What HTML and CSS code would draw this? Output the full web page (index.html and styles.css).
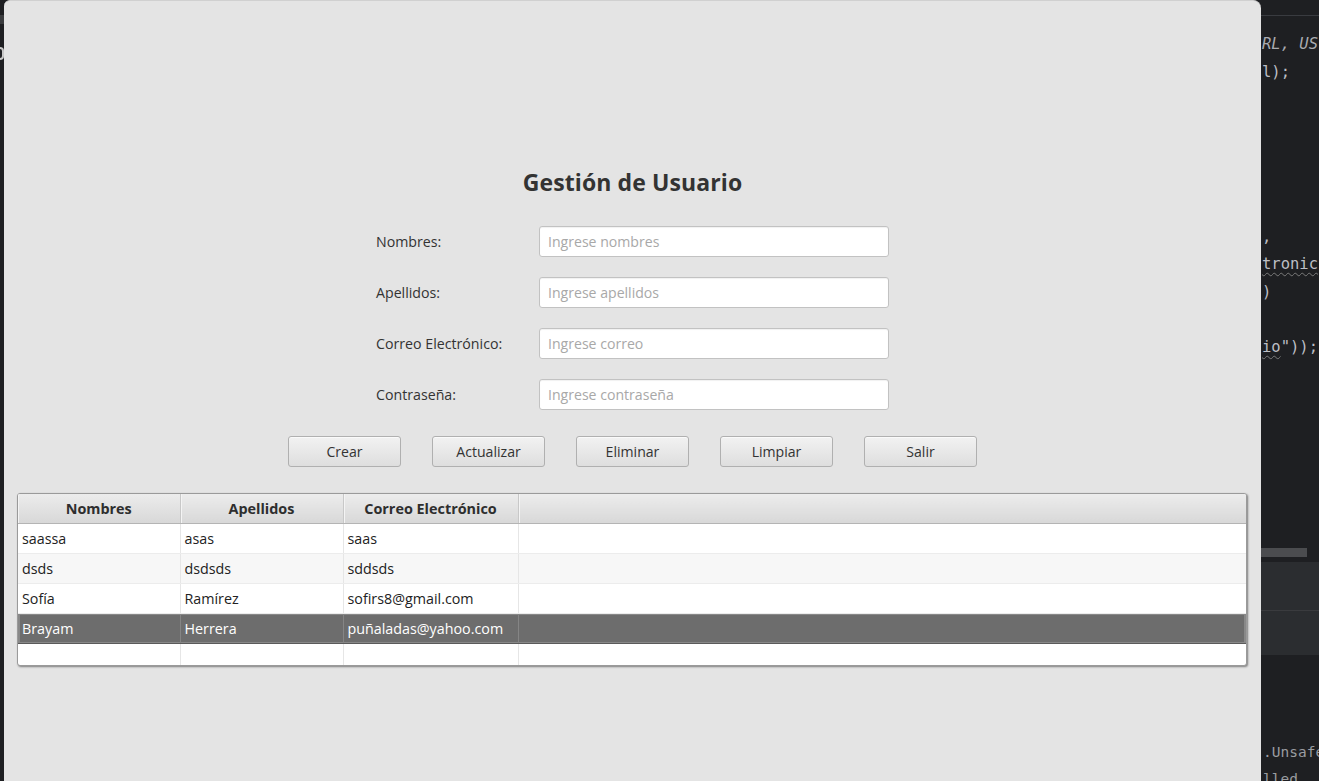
FILE: index.html
```html
<!DOCTYPE html>
<html lang="es">
<head>
<meta charset="utf-8">
<title>Gestión de Usuario</title>
<link rel="stylesheet" href="styles.css">
</head>
<body>
<div class="desktop">
  <div class="left-strip">
    <div class="strip-mark"></div>
    <div class="strip-glyph"></div>
  </div>
  <main class="window">
    <h1 class="title">Gestión de Usuario</h1>
    <form class="form">
      <label class="label">Nombres:</label>
      <input class="field" type="text" placeholder="Ingrese nombres">
      <label class="label">Apellidos:</label>
      <input class="field" type="text" placeholder="Ingrese apellidos">
      <label class="label">Correo Electrónico:</label>
      <input class="field" type="text" placeholder="Ingrese correo">
      <label class="label">Contraseña:</label>
      <input class="field" type="password" placeholder="Ingrese contraseña">
    </form>
    <div class="buttons">
      <button class="btn" type="button">Crear</button>
      <button class="btn" type="button">Actualizar</button>
      <button class="btn" type="button">Eliminar</button>
      <button class="btn" type="button">Limpiar</button>
      <button class="btn" type="button">Salir</button>
    </div>
    <div class="table-wrap">
      <table class="grid">
        <colgroup>
          <col class="c1"><col class="c2"><col class="c3"><col class="c4">
        </colgroup>
        <thead>
          <tr><th>Nombres</th><th>Apellidos</th><th>Correo Electrónico</th><th></th></tr>
        </thead>
        <tbody>
          <tr><td>saassa</td><td>asas</td><td>saas</td><td></td></tr>
          <tr class="odd"><td>dsds</td><td>dsdsds</td><td>sddsds</td><td></td></tr>
          <tr><td>Sofía</td><td>Ramírez</td><td>sofirs8@gmail.com</td><td></td></tr>
          <tr class="selected"><td>Brayam</td><td>Herrera</td><td>puñaladas@yahoo.com</td><td></td></tr>
          <tr class="empty"><td></td><td></td><td></td><td></td></tr>
        </tbody>
      </table>
    </div>
  </main>
  <aside class="ide">
    <div class="ide-top"></div>
    <pre class="code"><span class="it">RL, US</span>
l);





,
<span class="wavy">tronic</span>
)

<span class="wavy">io</span>"));</pre>
    <div class="ide-scroll"></div>
    <div class="ide-panel"></div>
    <div class="ide-panel second"></div>
    <pre class="code bottom">.Unsafe
lled</pre>
  </aside>
</div>
</body>
</html>
```
FILE: styles.css
```css
* { box-sizing: border-box; }
html, body { margin: 0; padding: 0; }
body {
  width: 1319px;
  height: 781px;
  overflow: hidden;
  background: #1e1f22;
  font-family: "Open Sans", "Noto Sans", sans-serif;
}
.desktop {
  display: flex;
  width: 1319px;
  height: 781px;
}
.left-strip {
  width: 4px;
  flex: none;
  background: #1e1f22;
  display: flex;
  flex-direction: column;
}
.strip-mark {
  margin-top: 15px;
  height: 9px;
  background: #3a3b3e;
}
.strip-glyph {
  margin-top: 23px;
  height: 13px;
  width: 4px;
  border: 2px solid #c8c8c8;
  border-left: none;
  border-radius: 0 6px 6px 0;
}
.window {
  width: 1257px;
  flex: none;
  height: 781px;
  background: #e4e4e4;
  border-radius: 6px 8px 0 0;
  border-top: 1px solid #d0d0d0;
  display: flex;
  flex-direction: column;
  align-items: center;
  color: #333;
}
.title {
  margin: 165px 0 0;
  font-size: 23px;
  line-height: 32px;
  font-weight: 700;
  color: #333;
  letter-spacing: 0.1px;
}
.form {
  margin-top: 28px;
  display: grid;
  grid-template-columns: 163px 350px;
  row-gap: 20px;
  align-items: center;
}
.label {
  font-size: 14.2px;
  color: #333;
}
.field {
  height: 31px;
  width: 350px;
  border: 1px solid #c2c2c2;
  border-radius: 3px;
  background: #fff;
  padding: 0 8px;
  font-family: inherit;
  font-size: 14.1px;
  color: #333;
  box-shadow: inset 0 1px 1px rgba(0,0,0,0.06);
  outline: none;
}
.field::placeholder { color: #a8a8a8; }
.buttons {
  margin-top: 26px;
  display: flex;
  gap: 31px;
}
.btn {
  width: 113px;
  height: 31px;
  border: 1px solid #b0b0b0;
  border-radius: 3px;
  background: linear-gradient(#f2f2f2, #dedede);
  box-shadow: inset 0 1px 0 #fafafa;
  font-family: inherit;
  font-size: 14.1px;
  line-height: 29px;
  color: #333;
  padding: 0 0 1px;
}
.table-wrap {
  margin-top: 26px;
  align-self: stretch;
  margin-left: 13px;
  margin-right: 14px;
  border: 1px solid #9a9a9a;
  border-radius: 3px;
  background: #fff;
  box-shadow: 1px 1px 2px rgba(0,0,0,0.45);
  overflow: hidden;
}
.grid {
  width: 100%;
  border-collapse: collapse;
  table-layout: fixed;
  font-size: 14.3px;
  color: #222;
}
.c1 { width: 162px; }
.c2 { width: 163px; }
.c3 { width: 175px; }
.grid th {
  height: 29px;
  padding: 0;
  font-size: 14.4px;
  font-weight: 700;
  color: #2e2e2e;
  background: linear-gradient(#ececec, #d8d8d8);
  border-right: 1px solid #c8c8c8;
  border-bottom: 1px solid #b4b4b4;
  box-shadow: inset 1px 0 0 #f4f4f4;
}
.grid th:last-child { border-right: none; }
.grid td {
  height: 30px;
  padding: 0 4px;
  border-right: 1px solid #e6e6e6;
  border-bottom: 1px solid #ececec;
  white-space: nowrap;
}
.grid td:last-child { border-right: none; }
.grid tr.odd td { background: #f7f7f7; }
.grid tr.selected td {
  background: #6d6d6d;
  color: #fff;
  border-right-color: #858585;
  border-top: 1px solid #5a5a5a;
  border-bottom: 1px solid #5a5a5a;
  box-shadow: inset 0 1px 0 #888, inset 0 -1px 0 #888;
}
.grid tr.selected td:first-child { box-shadow: inset 0 1px 0 #888, inset 0 -1px 0 #888, inset 2px 0 0 #888; }
.grid tr.selected td:last-child { box-shadow: inset 0 1px 0 #888, inset 0 -1px 0 #888, inset -2px 0 0 #888; }
.grid tr.empty td { height: 22px; border-bottom: none; }
.ide {
  flex: 1;
  height: 781px;
  background: #1e1f22;
  display: flex;
  flex-direction: column;
  overflow: hidden;
}
.ide > * { flex: none; }
.ide-top {
  height: 16px;
  border-bottom: 1px solid #393b40;
  background: #1e1f22;
}
.code {
  margin: 15px 0 0 1px;
  height: 330px;
  font-family: "DejaVu Sans Mono", "Liberation Mono", monospace;
  font-size: 15.5px;
  line-height: 27.5px;
  color: #bcbec4;
  white-space: pre;
}
.code .it { font-style: italic; color: #a9abb0; }
.code .wavy {
  text-decoration: underline wavy #7a7a7a;
  text-decoration-thickness: 1px;
  text-underline-offset: 3px;
}
.ide-scroll {
  margin-top: 187px;
  width: 46px;
  height: 9px;
  background: #4b4c4f;
}
.ide-panel {
  margin-top: 5px;
  height: 49px;
  background: #2b2d30;
  border-bottom: 1px solid #3a3b3e;
}
.ide-panel.second {
  margin-top: 0;
  height: 44px;
  border-bottom: none;
}
.code.bottom {
  margin-top: 84px;
  margin-left: 2px;
  height: 54px;
  font-size: 14.5px;
  line-height: 27px;
  color: #9a9ca0;
}
```
